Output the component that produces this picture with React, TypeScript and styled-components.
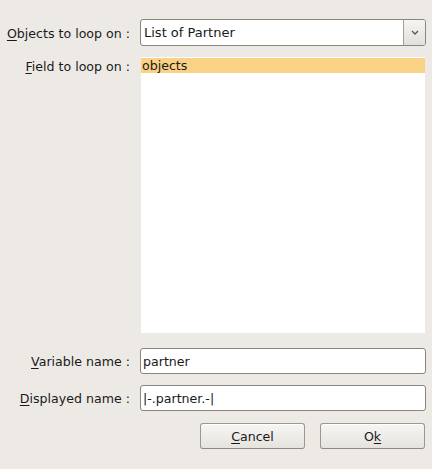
import React from "react";
import styled, { createGlobalStyle } from "styled-components";

const Global = createGlobalStyle`
  html, body { margin: 0; padding: 0; background: #edeae6; }
  body { font-family: "DejaVu Sans", "Liberation Sans", sans-serif; font-size: 12.6px; color: #1a1a1a; }
`;

const Dialog = styled.div`
  width: 432px;
  height: 469px;
  box-sizing: border-box;
  padding: 19px 6px 0 0;
  background: #edeae6;
  display: flex;
  flex-direction: column;
`;

const Form = styled.div`
  display: grid;
  grid-template-columns: 130px 1fr;
  column-gap: 10px;
  grid-template-rows: 27px 276px 30px 26px;
  row-gap: 11px;
`;

const Label = styled.div<{ $top?: boolean }>`
  text-align: right;
  white-space: nowrap;
  display: flex;
  justify-content: flex-end;
  align-items: ${(p) => (p.$top ? "flex-start" : "center")};
  align-self: ${(p) => (p.$top ? "start" : "end")};
  height: ${(p) => (p.$top ? "auto" : "26px")};
  padding-top: ${(p) => (p.$top ? "2px" : "0")};
  line-height: 15px;
`;

const U = styled.span`
  text-decoration: underline;
  text-underline-offset: 2px;
`;

const Combo = styled.div`
  display: flex;
  height: 27px;
  box-sizing: border-box;
  border: 1px solid #8b8580;
  border-radius: 3px;
  background: #fff;
  overflow: hidden;
`;

const ComboText = styled.div`
  flex: 1;
  display: flex;
  align-items: center;
  padding-left: 3px;
  font-size: 13px;
`;

const ComboButton = styled.div`
  width: 21px;
  border-left: 1px solid #a39f99;
  background: linear-gradient(#f6f5f3, #e3e0db);
  display: flex;
  align-items: center;
  justify-content: center;
`;

const List = styled.div`
  margin-left: 1px;
  margin-right: 1px;
  background: #fff;
  padding-top: 1px;
`;

const ListItem = styled.div<{ $selected?: boolean }>`
  height: 15px;
  line-height: 15px;
  padding-left: 1px;
  background: ${(p) => (p.$selected ? "#fad286" : "transparent")};
`;

const Input = styled.div`
  align-self: end;
  height: 26px;
  box-sizing: border-box;
  border: 1px solid #8b8580;
  border-radius: 3px;
  background: #fff;
  display: flex;
  align-items: center;
  padding-left: 2px;
`;

const Buttons = styled.div`
  display: flex;
  justify-content: flex-end;
  gap: 15px;
  margin-top: 12px;
  padding-right: 1px;
`;

const Button = styled.div`
  width: 105px;
  height: 26px;
  box-sizing: border-box;
  border: 1px solid #9c978f;
  border-bottom-color: #8e8982;
  border-radius: 3px;
  background: linear-gradient(#f7f6f4, #e6e3de);
  box-shadow: inset 0 1px 0 #fff;
  display: flex;
  align-items: center;
  justify-content: center;
`;

export default function App() {
  return (
    <>
      <Global />
      <Dialog>
        <Form>
          <Label>
            <span>
              <U>O</U>bjects to loop on :
            </span>
          </Label>
          <Combo>
            <ComboText>List of Partner</ComboText>
            <ComboButton>
              <svg width="8" height="5" viewBox="0 0 8 5">
                <path d="M1 1 L4 4 L7 1" stroke="#555" strokeWidth="1.3" fill="none" />
              </svg>
            </ComboButton>
          </Combo>
          <Label $top>
            <span>
              <U>F</U>ield to loop on :
            </span>
          </Label>
          <List>
            <ListItem $selected>objects</ListItem>
          </List>
          <Label>
            <span>
              <U>V</U>ariable name :
            </span>
          </Label>
          <Input>partner</Input>
          <Label>
            <span>
              <U>D</U>isplayed name :
            </span>
          </Label>
          <Input>|-.partner.-|</Input>
        </Form>
        <Buttons>
          <Button>
            <span>
              <U>C</U>ancel
            </span>
          </Button>
          <Button>
            <span>
              O<U>k</U>
            </span>
          </Button>
        </Buttons>
      </Dialog>
    </>
  );
}
